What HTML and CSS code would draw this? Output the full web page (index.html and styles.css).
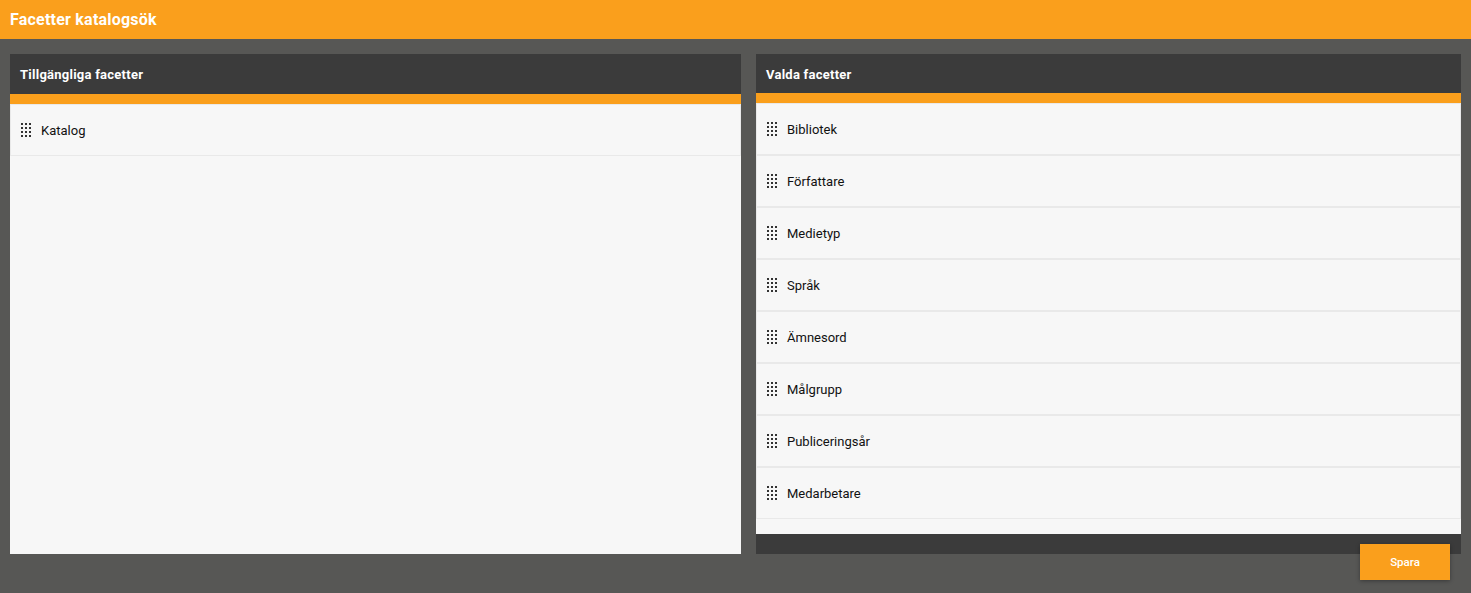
FILE: index.html
```html
<!DOCTYPE html>
<html lang="sv">
<head>
<meta charset="utf-8">
<title>Facetter katalogsök</title>
<link rel="stylesheet" href="styles.css">
</head>
<body>
<svg class="sprite" width="0" height="0"><defs><g id="dots"><rect x="0" y="0" width="2" height="2"/><rect x="4" y="0" width="2" height="2"/><rect x="8" y="0" width="2" height="2"/><rect x="0" y="4" width="2" height="2"/><rect x="4" y="4" width="2" height="2"/><rect x="8" y="4" width="2" height="2"/><rect x="0" y="8" width="2" height="2"/><rect x="4" y="8" width="2" height="2"/><rect x="8" y="8" width="2" height="2"/><rect x="0" y="12" width="2" height="2"/><rect x="4" y="12" width="2" height="2"/><rect x="8" y="12" width="2" height="2"/></g></defs></svg>
<header class="topbar">Facetter katalogsök</header>
<main class="columns">
  <section class="panel panel-left">
    <h2 class="panel-title">Tillgängliga facetter</h2>
    <ul class="list">
      <li class="item"><svg class="handle" viewBox="0 0 10 14"><use href="#dots"/></svg>Katalog</li>
    </ul>
  </section>
  <section class="panel panel-right">
    <h2 class="panel-title">Valda facetter</h2>
    <ul class="list">
      <li class="item"><svg class="handle" viewBox="0 0 10 14"><use href="#dots"/></svg>Bibliotek</li>
      <li class="item"><svg class="handle" viewBox="0 0 10 14"><use href="#dots"/></svg>Författare</li>
      <li class="item"><svg class="handle" viewBox="0 0 10 14"><use href="#dots"/></svg>Medietyp</li>
      <li class="item"><svg class="handle" viewBox="0 0 10 14"><use href="#dots"/></svg>Språk</li>
      <li class="item"><svg class="handle" viewBox="0 0 10 14"><use href="#dots"/></svg>Ämnesord</li>
      <li class="item"><svg class="handle" viewBox="0 0 10 14"><use href="#dots"/></svg>Målgrupp</li>
      <li class="item"><svg class="handle" viewBox="0 0 10 14"><use href="#dots"/></svg>Publiceringsår</li>
      <li class="item"><svg class="handle" viewBox="0 0 10 14"><use href="#dots"/></svg>Medarbetare</li>
    </ul>
    <div class="panel-foot"></div>
    <button class="save" type="button">Spara</button>
  </section>
</main>
</body>
</html>
```
FILE: styles.css
```css
* { box-sizing: border-box; }
html, body { margin: 0; height: 100%; }
body {
  background: #575755;
  font-family: Roboto, "Liberation Sans", sans-serif;
  overflow: hidden;
}
.sprite { position: absolute; }
.topbar {
  height: 39px;
  background: #fa9f1c;
  color: #fff;
  font-size: 16px;
  font-weight: 700;
  letter-spacing: .22px;
  line-height: 39px;
  padding-left: 10px;
}
.columns {
  display: flex;
  gap: 15px;
  padding: 15px 10px 0;
}
.panel {
  height: 500px;
  background: #f7f7f7;
  display: flex;
  flex-direction: column;
  position: relative;
}
.panel-left { width: 731px; }
.panel-right { width: 705px; }
.panel-title {
  margin: 0;
  background: #3b3b3b;
  color: #fff;
  font-size: 13px;
  font-weight: 700;
  letter-spacing: .25px;
  padding-left: 10px;
  line-height: 41px;
  border-bottom: 10px solid #fa9f1c;
  height: 49px;
}
.panel-left .panel-title { height: 50px; }
.list {
  list-style: none;
  margin: 0;
  padding: 0;
  flex: 1;
}
.item {
  height: 52px;
  display: flex;
  align-items: center;
  padding: 0 0 0 9px;
  color: #111;
  font-size: 13px;
  border: 1px solid #e9e9e9;
}
.handle {
  width: 12px;
  height: 14px;
  fill: #333;
  margin-right: 9px;
  flex: none;
}
.panel-foot { height: 20px; background: #3b3b3b; }
.save {
  position: absolute;
  right: 11px;
  top: 490px;
  width: 90px;
  height: 36px;
  border: 0;
  background: #fa9f1c;
  color: #fff;
  font-family: inherit;
  font-size: 11.5px;
  font-weight: 500;
  box-shadow: 0 1px 4px rgba(0,0,0,.35);
}
```
